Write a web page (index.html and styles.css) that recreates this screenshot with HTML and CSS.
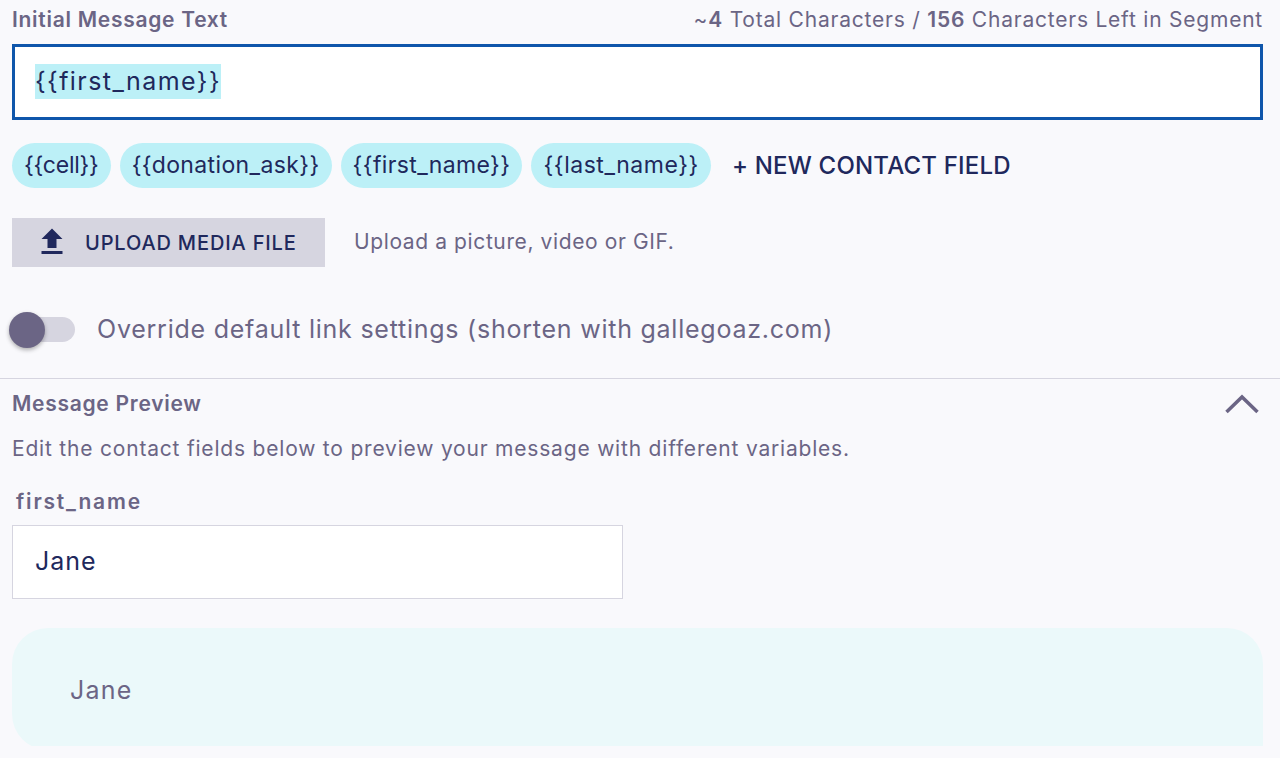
FILE: index.html
```html
<!DOCTYPE html>
<html lang="en">
<head>
<meta charset="utf-8">
<title>Initial Message Text</title>
<link rel="stylesheet" href="styles.css">
</head>
<body>
<main class="page">
  <section class="editor">
    <div class="label-row">
      <span class="label">Initial Message Text</span>
      <span class="count">~<b>4</b> Total Characters / <b>156</b> Characters Left in Segment</span>
    </div>
    <div class="message-input"><span class="token-highlight">{{first_name}}</span></div>
    <div class="chips">
      <span class="chip chip-short">{{cell}}</span>
      <span class="chip">{{donation_ask}}</span>
      <span class="chip">{{first_name}}</span>
      <span class="chip chip-wide">{{last_name}}</span>
      <span class="new-field">+ NEW CONTACT FIELD</span>
    </div>
    <div class="upload-row">
      <button class="upload-btn" type="button">
        <svg class="upload-icon" viewBox="0 0 24 24" aria-hidden="true"><path d="M9 16h6v-6h4l-7-7-7 7h4zM5 18h14v2H5z"/></svg>
        <span>UPLOAD MEDIA FILE</span>
      </button>
      <span class="upload-hint">Upload a picture, video or GIF.</span>
    </div>
    <div class="toggle-row">
      <span class="toggle"><span class="toggle-track"></span><span class="toggle-thumb"></span></span>
      <span class="toggle-label">Override default link settings (shorten with gallegoaz.com)</span>
    </div>
  </section>
  <section class="preview">
    <div class="preview-head">
      <span class="label">Message Preview</span>
      <svg class="chevron" viewBox="0 0 34 20" aria-hidden="true"><path d="M1.5 18 17 3l15.500 15"/></svg>
    </div>
    <p class="preview-help">Edit the contact fields below to preview your message with different variables.</p>
    <div class="field-label">first_name</div>
    <div class="field-input">Jane</div>
    <div class="bubble-clip"><div class="bubble">Jane</div></div>
  </section>
</main>
</body>
</html>
```
FILE: styles.css
```css
* { box-sizing: border-box; }
html, body { margin: 0; height: 100%; }
body {
  background: #f9f9fc;
  font-family: Inter, "Liberation Sans", sans-serif;
  color: #6b6585;
  overflow: hidden;
}
.page { width: 1280px; height: 758px; }
.editor { padding: 0 17px 0 12px; height: 378px; }
.label-row {
  display: flex;
  justify-content: space-between;
  align-items: center;
  height: 44px;
  padding-bottom: 6px;
}
.label { font-size: 21px; font-weight: 600; letter-spacing: 0.72px; }
.count { font-size: 21px; letter-spacing: 0.78px; }
.count b { font-weight: 600; }
.message-input {
  height: 76px;
  background: #fff;
  border: 3px solid #0f56ab;
  padding: 17px 20px 0;
  font-size: 25px;
  line-height: 35px;
  letter-spacing: 1.43px;
  color: #20285c;
}
.token-highlight { background: #bcf0f7; display: inline-block; }
.chips {
  display: flex;
  align-items: center;
  gap: 9px;
  margin-top: 23px;
  height: 45px;
}
.chip {
  height: 45px;
  line-height: 45px;
  padding: 0 12px;
  border-radius: 23px;
  background: #bcf0f7;
  color: #20285c;
  font-size: 23px;
  letter-spacing: 0.37px;
}
.chip-short { letter-spacing: -0.25px; }
.chip-wide { letter-spacing: 0.54px; }
.new-field {
  margin-left: 12px;
  padding-bottom: 1px;
  font-size: 24px;
  font-weight: 500;
  letter-spacing: 0.2px;
  color: #20285c;
}
.upload-row {
  display: flex;
  align-items: center;
  gap: 29px;
  margin-top: 30px;
}
.upload-btn {
  display: flex;
  align-items: center;
  width: 313px;
  height: 49px;
  padding: 0 0 0 22px;
  border: 0;
  background: #d6d5e0;
  color: #20285c;
  font: 500 20px Inter, "Liberation Sans", sans-serif;
  letter-spacing: 0.85px;
}
.upload-icon { width: 36px; height: 36px; fill: #20285c; margin: 0 15px 2px 0; flex: none; }
.upload-hint { font-size: 21px; letter-spacing: 0.61px; padding-bottom: 2px; }
.toggle-row {
  display: flex;
  align-items: center;
  margin-top: 38px;
  height: 50px;
}
.toggle { position: relative; display: block; width: 66px; height: 36px; margin-left: -3px; flex: none; }
.toggle-track {
  position: absolute; left: 4px; right: 0; top: 5px;
  height: 25px; border-radius: 13px; background: #d6d5e0;
}
.toggle-thumb {
  position: absolute; left: 0; top: 0;
  width: 36px; height: 36px; border-radius: 50%;
  background: #6b6585;
  box-shadow: 0 2px 4px rgba(0,0,0,.3);
}
.toggle-label { margin-left: 22px; font-size: 25px; letter-spacing: 0.76px; padding-bottom: 2px; }
.preview { border-top: 1px solid #d6d5e0; padding: 0 17px 0 12px; }
.preview-head {
  display: flex;
  justify-content: space-between;
  align-items: center;
  height: 49px;
}
.chevron { width: 34px; height: 20px; margin-right: 4px; fill: none; stroke: #6b6585; stroke-width: 3.5; }
.preview-help { margin: 0; font-size: 21px; height: 42px; line-height: 42px; letter-spacing: 0.8px; }
.field-label {
  margin: 12px 0 0 4px;
  height: 43px;
  font-size: 21px;
  font-weight: 600;
  line-height: 40px;
  letter-spacing: 1.8px;
}
.field-input {
  width: 611px;
  height: 74px;
  background: #fff;
  border: 1px solid #d6d5e0;
  padding-left: 22px;
  line-height: 70px;
  font-size: 25px;
  letter-spacing: 1px;
  color: #20285c;
}
.bubble-clip { margin-top: 29px; height: 118px; overflow: hidden; }
.bubble {
  height: 122px;
  background: #ebf9fa;
  border-radius: 36px 36px 2px 36px;
  padding: 42px 58px 0;
  font-size: 25px;
  line-height: 40px;
  letter-spacing: 1.2px;
}
```
